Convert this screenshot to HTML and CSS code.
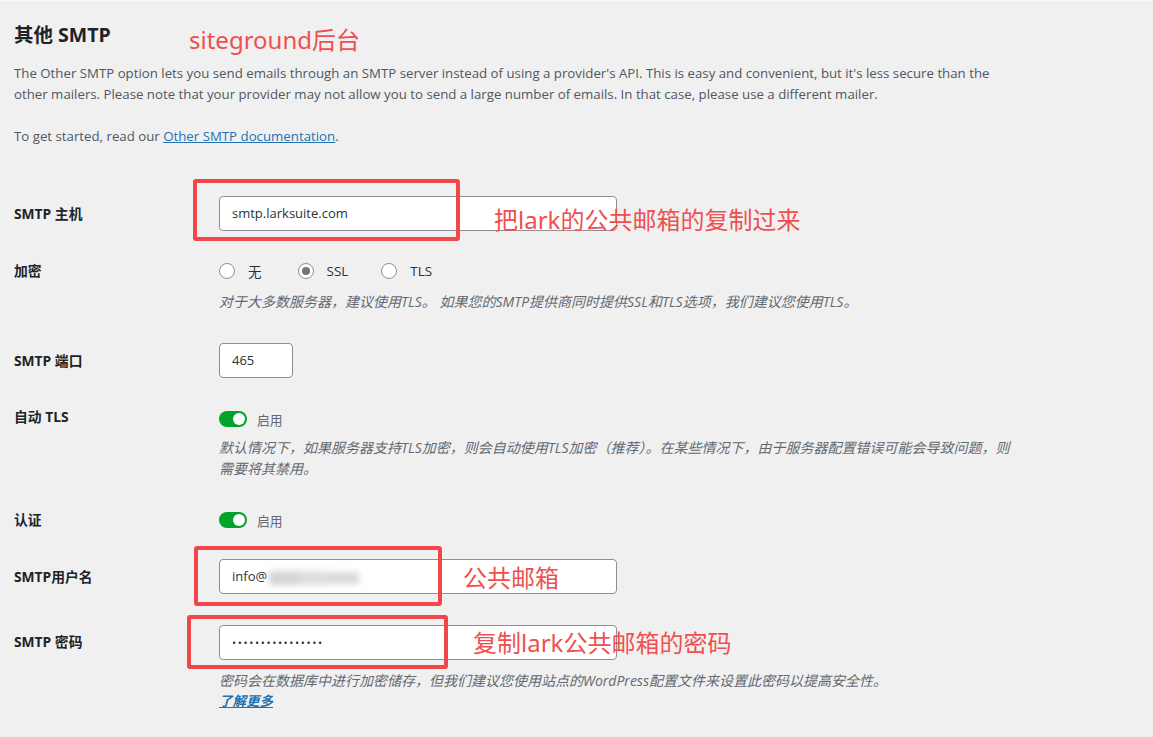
FILE: index.html
```html
<!DOCTYPE html>
<html lang="zh">
<head>
<meta charset="utf-8">
<title>其他 SMTP</title>
<link rel="stylesheet" href="styles.css">
</head>
<body>
<div class="page">
  <h2 class="title">其他 SMTP</h2>
  <p class="intro">The Other SMTP option lets you send emails through an SMTP server instead of using a provider's API. This is easy and convenient, but it's less secure than the<br>other mailers. Please note that your provider may not allow you to send a large number of emails. In that case, please use a different mailer.</p>
  <p class="intro start">To get started, read our <a class="doc-link" href="#">Other SMTP documentation</a>.</p>

  <div class="row row-host">
    <div class="label label-input">SMTP 主机</div>
    <div class="field">
      <div class="input wide">smtp.larksuite.com</div>
    </div>
  </div>

  <div class="row row-enc">
    <div class="label label-line">加密</div>
    <div class="field">
      <div class="radios">
        <span class="radio"></span><span class="radio-text first">无</span>
        <span class="radio checked"></span><span class="radio-text second">SSL</span>
        <span class="radio"></span><span class="radio-text">TLS</span>
      </div>
      <p class="desc desc-enc">对于大多数服务器，建议使用TLS。 如果您的SMTP提供商同时提供SSL和TLS选项，我们建议您使用TLS。</p>
    </div>
  </div>

  <div class="row row-port">
    <div class="label label-input">SMTP 端口</div>
    <div class="field">
      <div class="input narrow">465</div>
    </div>
  </div>

  <div class="row row-auto">
    <div class="label label-line label-up">自动 TLS</div>
    <div class="field">
      <div class="toggle-line"><span class="toggle"></span><span class="toggle-text">启用</span></div>
      <p class="desc desc-auto">默认情况下，如果服务器支持TLS加密，则会自动使用TLS加密（推荐）。在某些情况下，由于服务器配置错误可能会导致问题，则<br>需要将其禁用。</p>
    </div>
  </div>

  <div class="row row-authn">
    <div class="label label-line">认证</div>
    <div class="field">
      <div class="toggle-line"><span class="toggle"></span><span class="toggle-text">启用</span></div>
    </div>
  </div>

  <div class="row row-user">
    <div class="label label-input">SMTP用户名</div>
    <div class="field">
      <div class="input wide">info@<span class="blur"><span class="b1"></span><span class="b2"></span><span class="b3"></span></span></div>
    </div>
  </div>

  <div class="row row-pass">
    <div class="label label-input label-up1">SMTP 密码</div>
    <div class="field">
      <div class="input wide dots">••••••••••••••••</div>
      <p class="desc desc-pass">密码会在数据库中进行加密储存，但我们建议您使用站点的WordPress配置文件来设置此密码以提高安全性。</p>
      <a class="more" href="#">了解更多</a>
    </div>
  </div>

  <div class="anno anno-site">siteground后台</div>
  <div class="anno anno-host">把lark的公共邮箱的复制过来</div>
  <div class="anno anno-user">公共邮箱</div>
  <div class="anno anno-pass">复制lark公共邮箱的密码</div>
  <div class="mark mark-host"></div>
  <div class="mark mark-user"></div>
  <div class="mark mark-pass"></div>
</div>
</body>
</html>
```

FILE: styles.css
```css
html, body {
  margin: 0;
  padding: 0;
  background: #f0f0f1;
}
body {
  font-family: "Open Sans", "Noto Sans CJK SC", sans-serif;
  font-size: 13px;
  color: #3c434a;
  height: 737px;
  overflow: hidden;
  border-top: 1px solid #f8f8f8;
  box-sizing: border-box;
}
.page {
  position: relative;
  padding: 23px 14px 0 14px;
  height: 714px;
}
.title {
  margin: 0;
  font-size: 19.5px;
  line-height: 22px;
  font-weight: 700;
  color: #1d2327;
  font-family: "Open Sans", "Noto Sans CJK SC", sans-serif;
}
.intro {
  margin: 17px 0 0 0;
  font-size: 13.25px;
  line-height: 21px;
  color: #50575e;
  white-space: nowrap;
}
.intro.start {
  margin-top: 21px;
}
.doc-link {
  color: #2271b1;
  text-decoration: underline;
}
.row {
  display: flex;
  align-items: flex-start;
}
.label {
  width: 205px;
  flex: none;
  font-weight: 700;
  color: #1d2327;
  font-size: 13.8px;
}
.label-input {
  height: 35px;
  line-height: 35px;
}
.label-line {
  height: 20px;
  line-height: 20px;
}
.label-up {
  position: relative;
  top: -2px;
}
.label-up1 {
  position: relative;
  top: -1px;
}
.field {
  flex: 1;
}
.input {
  box-sizing: border-box;
  height: 35px;
  line-height: 33px;
  border: 1px solid #8c8f94;
  border-radius: 4px;
  background: #fff;
  padding: 0 12px;
  color: #2c3338;
  font-size: 13px;
}
.input.wide { width: 398px; }
.input.narrow { width: 74px; }
.input.dots {
  font-size: 11px;
  letter-spacing: 1.6px;
  color: #2c3338;
}
.row-host { margin-top: 49px; }
.row-enc { margin-top: 30px; }
.row-port { margin-top: 31px; }
.row-auto { margin-top: 31px; }
.row-authn { margin-top: 31px; }
.row-user { margin-top: 29px; }
.row-pass { margin-top: 31px; }

.radios {
  display: flex;
  align-items: center;
  height: 20px;
}
.radio {
  box-sizing: border-box;
  width: 16px;
  height: 16px;
  border: 1px solid #8c8f94;
  border-radius: 50%;
  background: #fff;
  display: inline-flex;
  align-items: center;
  justify-content: center;
}
.radio.checked::after {
  content: "";
  width: 8px;
  height: 8px;
  border-radius: 50%;
  background: #6b7785;
}
.radio-text {
  margin-left: 13px;
  color: #2c3338;
  font-size: 13.5px;
}
.radio-text.first { margin-right: 36px; }
.radio-text.second { margin-right: 33px; }

.desc {
  margin: 0;
  font-style: italic;
  color: #646970;
  font-size: 14px;
  line-height: 21px;
  white-space: nowrap;
}
.desc-enc { margin-top: 10px; }
.desc-auto { margin-top: 8px; }
.desc-pass { margin-top: 10px; }

.toggle-line {
  display: flex;
  align-items: center;
  height: 20px;
}
.toggle {
  position: relative;
  width: 28px;
  height: 16px;
  border-radius: 8px;
  background: #00a32a;
  display: inline-block;
}
.toggle::after {
  content: "";
  position: absolute;
  right: 2px;
  top: 2px;
  width: 12px;
  height: 12px;
  border-radius: 50%;
  background: #fff;
}
.toggle-text {
  margin-left: 10px;
  color: #646970;
  font-size: 12.8px;
}

.blur {
  display: inline-flex;
  align-items: center;
  vertical-align: middle;
  height: 20px;
  margin-left: 2px;
  filter: blur(3px);
}
.blur span {
  display: inline-block;
  height: 14px;
  background: #d6d6d6;
}
.blur .b1 { width: 30px; background: #d4d4d4; }
.blur .b2 { width: 28px; background: #dedede; }
.blur .b3 { width: 32px; background: #d8d8d8; height: 12px; }

.more {
  display: inline-block;
  margin-top: 0;
  color: #2271b1;
  font-style: italic;
  font-weight: 700;
  text-decoration: underline;
  font-size: 13.5px;
  line-height: 21px;
}

.anno {
  position: absolute;
  color: #ef4f4f;
  font-family: "Noto Sans", "Noto Sans CJK SC", sans-serif;
  font-size: 24px;
  line-height: 30px;
  white-space: nowrap;
}
.anno-site { left: 189px; top: 24px; font-size: 24px; }
.anno-host { left: 494px; top: 204px; }
.anno-user { left: 463px; top: 562px; }
.anno-pass { left: 473px; top: 627px; }

.mark {
  position: absolute;
  box-sizing: border-box;
  border: 4px solid #f2474a;
  border-radius: 3px;
}
.mark-host { left: 193px; top: 178px; width: 267px; height: 62px; }
.mark-user { left: 194px; top: 545px; width: 248px; height: 60px; }
.mark-pass { left: 187px; top: 614px; width: 261px; height: 54px; }
```
